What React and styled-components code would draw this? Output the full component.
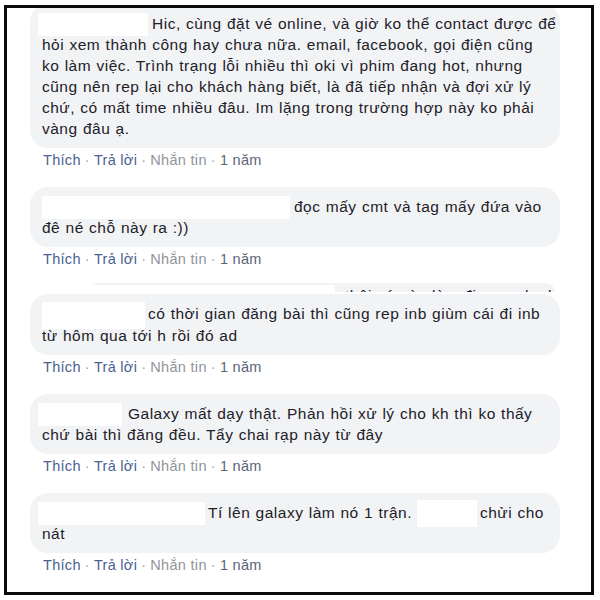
import styled, { createGlobalStyle } from "styled-components";

const GlobalStyle = createGlobalStyle`
  html, body {
    margin: 0;
    background: #fff;
  }
  body {
    font-family: "Liberation Sans", Arial, sans-serif;
    color: #1d2129;
  }
`;

const Page = styled.div`
  width: 600px;
  height: 600px;
  padding: 5px 0 0 4px;
  box-sizing: border-box;
`;

const Frame = styled.div`
  width: 590px;
  height: 590px;
  box-sizing: border-box;
  border: 3px solid #0a0a0a;
  padding: 0 0 0 23px;
  overflow: hidden;
  display: flex;
  flex-direction: column;
`;

const Comment = styled.div`
  display: flex;
  flex-direction: column;
  margin-top: ${({ $top }) => $top || 0}px;
  margin-bottom: ${({ $gap }) => ($gap == null ? 18 : $gap)}px;
`;

const Bubble = styled.div`
  width: ${({ $w }) => $w || 530}px;
  box-sizing: border-box;
  background: #f2f3f5;
  border-radius: 18px;
  padding: 9px 12px 9px;
  font-size: 15.5px;
  letter-spacing: 0.5px;
  word-spacing: 0.5px;
  line-height: 21px;
`;

const Line = styled.div`
  white-space: nowrap;
`;

const Redact = styled.span`
  display: inline-block;
  vertical-align: middle;
  width: ${({ $w }) => $w}px;
  height: ${({ $h }) => $h || 23}px;
  margin: -4px ${({ $after }) => $after ?? 4}px -4px ${({ $before }) => $before || 0}px;
  background: #fff;
`;

const Actions = styled.div`
  margin-top: 3px;
  padding-left: 13px;
  font-size: 14.5px;
  letter-spacing: 0.3px;
  line-height: 18px;
  color: #90949c;
  white-space: nowrap;
`;

const Link = styled.span`
  color: ${({ $muted }) => ($muted ? "#90949c" : "#4b5f92")};
`;

const Time = styled.span`
  color: #5b6477;
`;

const Dot = styled.span`
  margin: 0 4px;
  color: #a0a4ab;
`;

const Peek = styled.div`
  margin-left: 58px;
  width: 467px;
  height: 14px;
  overflow: hidden;
  background: #f2f3f5;
  border-radius: 14px 14px 0 0;
  box-sizing: border-box;
  padding-top: 2px;
  font-size: 15.5px;
  letter-spacing: 0.5px;
  line-height: 21px;
  margin-bottom: 2px;
`;

const comments = [
  {
    top: -4,
    lines: [
      [
        { w: 110, before: -4 },
        "Hic, cùng đặt vé online, và giờ ko thể contact được để",
      ],
      ["hỏi xem thành công hay chưa nữa. email, facebook, gọi điện cũng"],
      ["ko làm việc. Trình trạng lỗi nhiều thì oki vì phim đang hot, nhưng"],
      ["cũng nên rep lại cho khách hàng biết, là đã tiếp nhận và đợi xử lý"],
      ["chứ, có mất time nhiều đâu. Im lặng trong trường hợp này ko phải"],
      ["vàng đâu ạ."],
    ],
  },
  {
    gap: 15,
    lines: [
      [{ w: 248 }, "đọc mấy cmt và tag mấy đứa vào"],
      ["đê né chỗ này ra :))"],
    ],
  },
  {
    lines: [
      [{ w: 103, h: 27, after: 3 }, "có thời gian đăng bài thì cũng rep inb giùm cái đi inb"],
      ["từ hôm qua tới h rồi đó ad"],
    ],
  },
  {
    lines: [
      [{ w: 84, before: -4, after: 6 }, "Galaxy mất dạy thật. Phản hồi xử lý cho kh thì ko thấy"],
      ["chứ bài thì đăng đều. Tẩy chai rạp này từ đây"],
    ],
  },
  {
    lines: [
      [
        { w: 167, before: -4, after: 3 },
        "Tí lên galaxy làm nó 1 trận.",
        { w: 60, h: 27, before: 5, after: 3 },
        "chửi cho",
      ],
      ["nát"],
    ],
  },
];

const Piece = ({ part }) =>
  typeof part === "string" ? (
    part
  ) : (
    <Redact $w={part.w} $h={part.h} $before={part.before} $after={part.after} />
  );

const CommentItem = ({ data }) => (
  <Comment $top={data.top} $gap={data.gap}>
    <Bubble>
      {data.lines.map((line, i) => (
        <Line key={i}>
          {line.map((part, j) => (
            <Piece key={j} part={part} />
          ))}
        </Line>
      ))}
    </Bubble>
    <Actions>
      <Link>Thích</Link>
      <Dot>·</Dot>
      <Link>Trả lời</Link>
      <Dot>·</Dot>
      <Link $muted>Nhắn tin</Link>
      <Dot>·</Dot>
      <Time>1 năm</Time>
    </Actions>
  </Comment>
);

export default function App() {
  return (
    <>
      <GlobalStyle />
      <Page>
        <Frame>
          <CommentItem data={comments[0]} />
          <CommentItem data={comments[1]} />
          <Peek>
            <Line>
              <Redact $w={247} $after={10} />
              thôi cứ vào làm đi xem cho biết
            </Line>
          </Peek>
          <CommentItem data={comments[2]} />
          <CommentItem data={comments[3]} />
          <CommentItem data={comments[4]} />
        </Frame>
      </Page>
    </>
  );
}
